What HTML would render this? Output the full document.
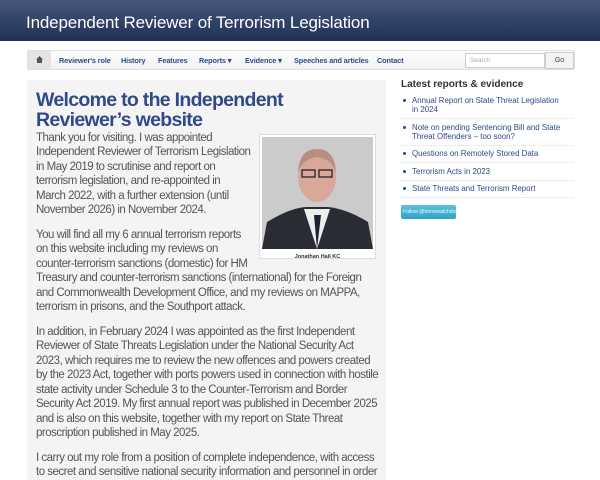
<!DOCTYPE html>
<html><head><meta charset="utf-8"><style>
*{margin:0;padding:0;box-sizing:border-box}
html,body{width:600px;height:480px;overflow:hidden}
body{background:#fff;font-family:"Liberation Sans",sans-serif;position:relative}
.hdr{position:absolute;left:0;top:0;width:600px;height:41px;background:linear-gradient(#46577a,#1f3057);}
.hdr h1{position:absolute;left:26px;top:13px;font-size:17px;color:#fff;font-weight:normal;letter-spacing:-0.15px}
.nav{position:absolute;left:27px;top:50px;width:548px;height:20px;background:linear-gradient(#fff,#f0f0f0);border:1px solid #e0e0e0;border-radius:2px}
.nav .home{position:absolute;left:0;top:0;width:23px;height:18px;background:#e4e4e4}
.nav span{position:absolute;top:5px;font-size:7.3px;font-weight:bold;color:#2d4a8a;letter-spacing:-0.1px}
.search{position:absolute;left:437px;top:2px;width:80px;height:15px;border:1px solid #ccc;background:#fff;font-size:6.5px;color:#aaa;padding:3px 4px}
.go{position:absolute;left:517px;top:1px;width:29px;height:17px;border:1px solid #ccc;background:#f3f3f3;color:#444;font-size:7px;text-align:center;padding-top:4px}
.main{position:absolute;left:27px;top:80px;width:359px;height:400px;background:#f4f4f4;overflow:hidden}
.main h2{position:absolute;left:9px;top:10px;font-size:19.5px;line-height:20px;color:#2e4a8a;font-weight:bold;letter-spacing:-0.7px}
.txt{position:absolute;left:9px;top:51px;width:344px;font-size:11.5px;line-height:14.4px;color:#555;letter-spacing:-0.5px}
.txt p{margin-bottom:10.6px}
.fig{float:right;width:117px;height:125px;margin:3px 4px 6px 8px;background:#fff;border:1px solid #ddd;position:relative}
.photo{position:absolute;left:2px;top:2px;width:111px;height:112px;background:#c9c9c9;overflow:hidden}
.cap{position:absolute;left:0;top:115px;width:115px;text-align:center;font-size:5.5px;font-weight:bold;color:#333;letter-spacing:0}
.side{position:absolute;left:401px;top:79px;width:175px}
.side h3{font-size:10px;font-weight:bold;color:#333;margin-bottom:6px}
.side li{list-style:none;position:relative;padding-left:11px;font-size:7.9px;line-height:9px;color:#2d4a8a;padding-bottom:4px;margin-bottom:3.6px;border-bottom:1px dotted #ddd;width:173px;padding-right:12px}
.side li:before{content:"";position:absolute;left:2px;top:3px;width:3px;height:3px;border-radius:50%;background:#2d4a8a}
.btn{display:inline-block;margin-top:3px;background:linear-gradient(#5bc0de,#2fa4c7);color:#eaf6fb;font-size:5.3px;letter-spacing:-0.1px;padding:4px 2px;border-radius:2px;width:55px;white-space:nowrap;overflow:hidden}
</style></head><body>
<div class="hdr"><h1>Independent Reviewer of Terrorism Legislation</h1></div>
<div class="nav"><div class="home"><svg width="23" height="18"><path d="M11.5 5 L8 8.5 H9 V12 H14 V8.5 H15 Z" fill="#555"/></svg></div>
<span style="left:31px">Reviewer's role</span><span style="left:93px">History</span><span style="left:130px">Features</span><span style="left:171px">Reports ▾</span><span style="left:217px">Evidence ▾</span><span style="left:266px">Speeches and articles</span><span style="left:349px">Contact</span>
<div class="search">Search</div><div class="go">Go</div></div>
<div class="main"><h2>Welcome to the Independent<br>Reviewer’s website</h2>
<div class="txt"><div class="fig"><div class="photo"><svg width="111" height="112"><rect width="111" height="112" fill="#cbcbcb"/><path d="M0 112 L5 85 Q30 70 45 70 L66 70 Q85 72 106 85 L111 112Z" fill="#2a2c33"/><path d="M42 72 L55 112 L68 72Z" fill="#eee"/><path d="M52 78 L55 112 L59 78Z" fill="#1c2233"/><ellipse cx="55" cy="40" rx="19" ry="25" fill="#d9a89a"/><path d="M36 36 Q37 12 55 12 Q73 12 74 36 Q70 22 55 20 Q40 22 36 36Z" fill="#b98e80"/><rect x="40" y="33" width="13" height="7" fill="none" stroke="#222" stroke-width="1.3"/><rect x="57" y="33" width="13" height="7" fill="none" stroke="#222" stroke-width="1.3"/></svg></div><div class="cap">Jonathan Hall KC</div></div>
<p>Thank you for visiting. I was appointed Independent Reviewer of Terrorism Legislation in May 2019 to scrutinise and report on terrorism legislation, and re-appointed in March 2022, with a further extension (until November 2026) in November 2024.</p>
<p>You will find all my 6 annual terrorism reports on this website including my reviews on counter-terrorism sanctions (domestic) for HM Treasury and counter-terrorism sanctions (international) for the Foreign and Commonwealth Development Office, and my reviews on MAPPA, terrorism in prisons, and the Southport attack.</p>
<p>In addition, in February 2024 I was appointed as the first Independent Reviewer of State Threats Legislation under the National Security Act 2023, which requires me to review the new offences and powers created by the 2023 Act, together with ports powers used in connection with hostile state activity under Schedule 3 to the Counter-Terrorism and Border Security Act 2019. My first annual report was published in December 2025 and is also on this website, together with my report on State Threat proscription published in May 2025.</p>
<p>I carry out my role from a position of complete independence, with access to secret and sensitive national security information and personnel in order</p>
</div></div>
<div class="side"><h3>Latest reports &amp; evidence</h3><ul>
<li>Annual Report on State Threat Legislation in 2024</li>
<li>Note on pending Sentencing Bill and State Threat Offenders – too soon?</li>
<li>Questions on Remotely Stored Data</li>
<li>Terrorism Acts in 2023</li>
<li>State Threats and Terrorism Report</li></ul>
<div class="btn">Follow @terrorwatchdog</div></div>
</body></html>
